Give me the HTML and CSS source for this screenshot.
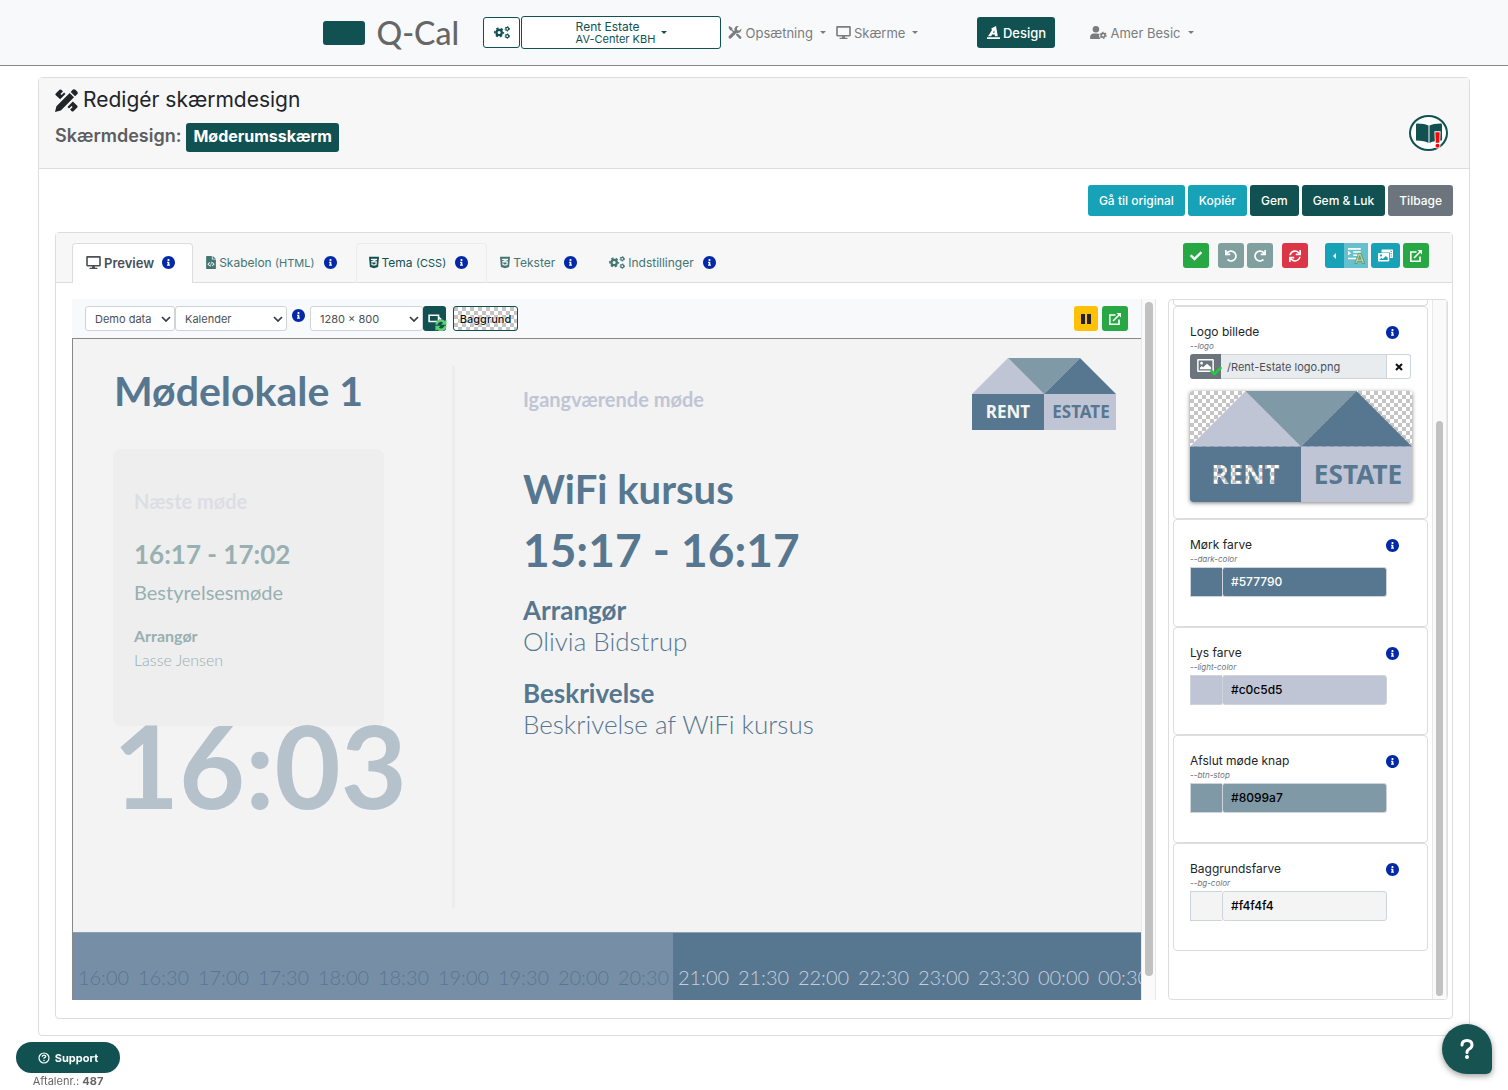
FILE: index.html
```html
<!DOCTYPE html>
<html lang="da">
<head>
<meta charset="utf-8">
<meta name="viewport" content="width=device-width, initial-scale=1">
<title>Q-Cal – Redigér skærmdesign</title>
<link rel="stylesheet" href="styles.css">
</head>
<body>
<svg class="sprite" aria-hidden="true">
  <symbol id="i-check" viewBox="0 0 512 512"><path d="M173.898 439.404l-166.4-166.4c-9.997-9.997-9.997-26.206 0-36.204l36.203-36.204c9.997-9.998 26.207-9.998 36.204 0L192 312.69 432.095 72.596c9.997-9.997 26.207-9.997 36.204 0l36.203 36.204c9.997 9.997 9.997 26.206 0 36.204l-294.4 294.401c-9.998 9.997-26.207 9.997-36.204-.001z"/></symbol>
  <symbol id="i-undo" viewBox="0 0 512 512"><path d="M212.333 224.333H12c-6.627 0-12-5.373-12-12V12C0 5.373 5.373 0 12 0h48c6.627 0 12 5.373 12 12v78.112C117.773 39.279 184.26 7.47 258.175 8.007c136.906.994 246.448 111.623 246.157 248.532C504.041 393.258 393.12 504 256.333 504c-64.089 0-122.496-24.313-166.51-64.215-5.099-4.622-5.334-12.554-.467-17.42l33.967-33.967c4.474-4.474 11.662-4.717 16.401-.525C170.76 415.336 211.58 432 256.333 432c97.268 0 176-78.716 176-176 0-97.267-78.716-176-176-176-58.496 0-110.28 28.476-142.274 72.333h98.274c6.627 0 12 5.373 12 12v48c0 6.627-5.373 12-12 12z"/></symbol>
  <symbol id="i-redo" viewBox="0 0 512 512"><use href="#i-undo" width="512" height="512" transform="matrix(-1 0 0 1 512 0)"/></symbol>
  <symbol id="i-sync" viewBox="0 0 512 512"><path d="M440.65 12.57l4 82.77A247.16 247.16 0 0 0 255.83 8C134.73 8 33.91 94.92 12.29 209.82A12 12 0 0 0 24.09 224h49.05a12 12 0 0 0 11.67-9.26 175.91 175.91 0 0 1 317-56.94l-101.46-4.86a12 12 0 0 0-12.57 12v47.41a12 12 0 0 0 12 12H500a12 12 0 0 0 12-12V12a12 12 0 0 0-12-12h-47.37a12 12 0 0 0-11.98 12.57zM255.83 432a175.61 175.61 0 0 1-146-77.8l101.8 4.87a12 12 0 0 0 12.57-12v-47.4a12 12 0 0 0-12-12H12a12 12 0 0 0-12 12V500a12 12 0 0 0 12 12h47.35a12 12 0 0 0 12-12.6l-4.15-82.57A247.17 247.17 0 0 0 255.83 504c121.11 0 221.93-86.92 243.55-201.82a12 12 0 0 0-11.8-14.18h-49.05a12 12 0 0 0-11.67 9.26A175.86 175.86 0 0 1 255.83 432z"/></symbol>
  <symbol id="i-desktop" viewBox="0 0 576 512"><path d="M528 0H48C21.5 0 0 21.5 0 48v320c0 26.5 21.5 48 48 48h192l-16 48h-72c-13.3 0-24 10.7-24 24s10.7 24 24 24h272c13.3 0 24-10.7 24-24s-10.7-24-24-24h-72l-16-48h192c26.5 0 48-21.5 48-48V48c0-26.5-21.5-48-48-48zm-16 352H64V64h448v288z"/></symbol>
  <symbol id="i-info" viewBox="8 8 496 496"><path d="M256 8C119.043 8 8 119.083 8 256c0 136.997 111.043 248 248 248s248-111.003 248-248C504 119.083 392.957 8 256 8zm0 110c23.196 0 42 18.804 42 42s-18.804 42-42 42-42-18.804-42-42 18.804-42 42-42zm56 254c0 6.627-5.373 12-12 12h-88c-6.627 0-12-5.373-12-12v-24c0-6.627 5.373-12 12-12h12v-64h-12c-6.627 0-12-5.373-12-12v-24c0-6.627 5.373-12 12-12h64c6.627 0 12 5.373 12 12v100h12c6.627 0 12 5.373 12 12v24z"/></symbol>
  <symbol id="i-css" viewBox="0 32 384 448"><path d="M0 32l34.9 395.8L192 480l157.1-52.2L384 32H0zm313.1 80l-4.8 47.3L193 208.6l-.3.1h111.5l-12.8 146.6-98.2 28.7-98.8-29.2-6.4-73.9h48.9l3.2 38.3 52.6 13.3 54.7-15.4 3.7-61.6-166.3-.5v-.1l-.2.1-3.6-46.3L193.1 162l6.5-2.7H76.7L70.9 112h242.2z"/></symbol>
  <symbol id="i-cogs" viewBox="0 0 640 512"><g fill="none" stroke="currentColor"><circle cx="205" cy="256" r="108" stroke-width="90"/><circle cx="205" cy="256" r="172" stroke-width="60" stroke-dasharray="92 88" stroke-dashoffset="46"/><circle cx="530" cy="110" r="58" stroke-width="48"/><circle cx="530" cy="110" r="92" stroke-width="36" stroke-dasharray="50 46.3"/><circle cx="530" cy="402" r="58" stroke-width="48"/><circle cx="530" cy="402" r="92" stroke-width="36" stroke-dasharray="50 46.3"/></g></symbol>
  <symbol id="i-tools" viewBox="0 0 16 16"><path d="M1 0l3.6 2.5.3 2L8 7.600 6.700 8.900 3.600 5.600l-1.800-.5L0 1.500zM9.700 9.300c.9-.4 1.700-.2 2.300.4l3.400 3.400a1.500 1.500 0 0 1-2.200 2.200l-3.400-3.500c-.6-.6-.7-1.500-.1-2.500z"/><path d="M15.700 3.200a4.300 4.300 0 0 1-5.600 5l-6.800 7a2 2 0 0 1-2.800-2.800l7-6.800a4.300 4.300 0 0 1 5.200-5.500L10.400 2.500l.3 2.700 2.700.3z"/></symbol>
  <symbol id="i-pencil-ruler" viewBox="0 0 24 24"><path d="M.8 4.800L4.700.900q1-.9 2 0l1.600 1.600-2.600 2.600 1.200 1.200 2.600-2.600 1.400 1.400L5.400 10.600.8 6.600q-.8-.9 0-1.800zM18.600 13l4.600 4.400q.9.9 0 1.800l-3.900 3.900q-1 .9-1.900 0l-1.600-1.600 2.600-2.600-1.200-1.200-2.600 2.600L13 18.700z"/><path d="M15.300 4.200l4.500 4.500L6.100 22.400 0 24l1.500-6zM16.400 3.100l2-2.200q1.400-1.400 2.900 0l1.800 1.800q1.400 1.400 0 2.900l-2.200 2z"/></symbol>
  <symbol id="i-user-cog" viewBox="0 0 18 14"><circle cx="6.200" cy="3.500" r="3.500"/><path d="M0 14v-2.200C0 9.600 1.700 8 3.800 8h3.800c.8 0 1.600.2 2.200.7-.5 2 .2 4 1.500 5.300z"/><g fill="none" stroke="currentColor"><circle cx="14" cy="10" r="2.100" stroke-width="1.700"/><circle cx="14" cy="10" r="3.300" stroke-width="1.200" stroke-dasharray="1.700 1.760"/></g></symbol>
  <symbol id="i-drafting" viewBox="0 0 13 13"><path fill-rule="evenodd" d="M0 11.300h13V13H0zM1 10.300l4-6.300-.8-1.500L9 0l1.800 10.300H8L7.700 8.500H5l-.8 1.800zM6 6.700h1.500l-.3-2.400z"/></symbol>
  <symbol id="i-file-code" viewBox="0 0 12 16"><path fill-rule="evenodd" d="M.7 0H7v4.300h5v11c0 .4-.3.700-.7.700H.7c-.4 0-.7-.3-.7-.7V.7C0 .3.300 0 .7 0zM8 0l4 3.500H8zM4.200 7.500L1.500 10l2.700 2.500.7-.8L3.100 10l1.800-1.700zM7.800 7.500l-.7.8L8.900 10l-1.800 1.700.7.800L10.500 10zM6.300 7l-1.400 6h.9l1.300-6z"/></symbol>
  <symbol id="i-external" viewBox="0 0 12 12"><path fill="none" stroke="currentColor" stroke-width="1.600" d="M6.500 2H.8v9.200H10V6.500M4 8l6.500-6.500"/><path d="M7.500 0H12v4.500z"/></symbol>
  <symbol id="i-caret" viewBox="0 0 6 3"><path d="M0 0h6L3 3z"/></symbol>
  <symbol id="i-book" viewBox="0 0 26 20"><path d="M0 1.500Q0 .500 1 .500q8 .2 11.500 2V20Q9 17.700 0 17.500zM26 1.500q0-1-1-1-8 .2-11.500 2V20q3.500-2.300 12.500-2.500z"/></symbol>
  <symbol id="i-images" viewBox="0 0 15 12"><path fill-rule="evenodd" d="M4 0h10.300q.7 0 .7.700v7q0 .8-.7.800H12V3H3.500V.7Q3.500 0 4 0zm8.600 1.300v1.200h1.200V1.300zm0 2.300v1.200h1.200V3.600zm0 2.300v1.200h1.200V5.900zM.7 3.500h9.800q.7 0 .7.700v7q0 .8-.7.800H.7q-.7 0-.7-.8v-7q0-.7.700-.7zm.8 7h8.200V8.200L7.700 6.500l-2.900 3-1.300-1.300-2 1.700zM3 5a1 1 0 1 0 .1 0z"/></symbol>
  <symbol id="i-image" viewBox="0 0 18 14"><path fill-rule="evenodd" d="M1 0h16q1 0 1 1v12q0 1-1 1H1q-1 0-1-1V1q0-1 1-1zm.6 1.600v10.800h14.800V1.600zM3 11V9.500l2-2 1.500 1.500 4-4L15 9v2zM4.700 3a1.500 1.500 0 1 0 .1 0z"/></symbol>
  <symbol id="i-house" viewBox="0 0 144 72"><path fill="#c0c5d5" d="M0 36L36 0l36 36zM72 36h72v36H72z"/><path fill="#8099a7" d="M36 0h72L72 36z"/><path fill="#577790" d="M108 0l36 36H72zM0 36h72v36H0z"/></symbol>
</svg>

<header class="navbar">
  <a class="brand" href="#"><span class="brand-mark"></span>Q-Cal</a>
  <button class="btn-outline gear-btn" aria-label="Indstillinger"><svg class="ico w16"><use href="#i-cogs"/></svg></button>
  <button class="btn-outline tenant"><span class="tenant-text">Rent Estate<small>AV-Center KBH</small></span><svg class="caret"><use href="#i-caret"/></svg></button>
  <nav class="menu">
    <a href="#"><svg class="ico w14"><use href="#i-tools"/></svg>Opsætning<svg class="caret"><use href="#i-caret"/></svg></a>
    <a href="#"><svg class="ico w15"><use href="#i-desktop"/></svg>Skærme<svg class="caret"><use href="#i-caret"/></svg></a>
  </nav>
  <a class="design-btn" href="#"><svg class="ico w13"><use href="#i-drafting"/></svg>Design</a>
  <a class="user" href="#"><svg class="ico w17"><use href="#i-user-cog"/></svg>Amer Besic<svg class="caret"><use href="#i-caret"/></svg></a>
</header>

<main class="card page-card">
  <div class="page-head">
    <div>
      <h1><svg class="title-ico"><use href="#i-pencil-ruler"/></svg>Redigér skærmdesign</h1>
      <h2>Skærmdesign: <span class="badge">Møderumsskærm</span></h2>
    </div>
    <button class="guide" aria-label="Vejledning"><svg class="guide-book"><use href="#i-book"/></svg><svg class="guide-mark" viewBox="0 0 8 20"><path d="M1.500 1h5l-.5 12H2zM4 14.200a2.300 2.300 0 1 0 .1 0z"/></svg></button>
  </div>

  <div class="page-body">
    <div class="actions">
      <button class="btn info">Gå til original</button>
      <button class="btn info">Kopiér</button>
      <button class="btn primary">Gem</button>
      <button class="btn primary">Gem &amp; Luk</button>
      <button class="btn secondary">Tilbage</button>
    </div>

    <section class="card">
      <div class="tabbar">
        <nav class="tabs">
          <a class="tab active" href="#"><svg class="ico w15"><use href="#i-desktop"/></svg>Preview<svg class="tip"><use href="#i-info"/></svg></a>
          <a class="tab" href="#"><svg class="ico w10"><use href="#i-file-code"/></svg><span>Skabelon <small>(HTML)</small></span><svg class="tip"><use href="#i-info"/></svg></a>
          <a class="tab hover" href="#"><svg class="ico w10"><use href="#i-css"/></svg><span>Tema <small>(CSS)</small></span><svg class="tip"><use href="#i-info"/></svg></a>
          <a class="tab" href="#"><svg class="ico w10"><use href="#i-css"/></svg>Tekster<svg class="tip"><use href="#i-info"/></svg></a>
          <a class="tab" href="#"><svg class="ico w16"><use href="#i-cogs"/></svg>Indstillinger<svg class="tip"><use href="#i-info"/></svg></a>
        </nav>
        <div class="tools">
          <div class="tool-group"><button class="tool success" aria-label="Anvend"><svg class="ico w12"><use href="#i-check"/></svg></button></div>
          <div class="tool-group">
            <button class="tool muted" aria-label="Fortryd"><svg class="ico w12"><use href="#i-undo"/></svg></button>
            <button class="tool muted" aria-label="Gentag"><svg class="ico w12"><use href="#i-redo"/></svg></button>
          </div>
          <div class="tool-group"><button class="tool danger" aria-label="Nulstil"><svg class="ico w12"><use href="#i-sync"/></svg></button></div>
          <div class="tool-group last">
            <div class="split">
              <button class="tool teal slim" aria-label="Fold ud"><svg class="side-caret" viewBox="0 0 3 6"><path d="M3 0v6L0 3z"/></svg></button>
              <button class="tool teal faded" aria-label="Formatér"><svg class="format-ico" viewBox="0 0 16 16"><path d="M0 1h12v1.500H0zM5 4h7v1.500H5zM5 7h7v1.500H5zM0 10h9v1.500H0zM0 3.500l3 2.300L0 8z" fill="#fff"/><path fill="#b5d69a" stroke="#5d7d52" stroke-width=".6" fill-rule="evenodd" d="M6.500 15.500L9.800 6h2.400l3.500 9.500h-2.200l-.7-2H9.300l-.7 2zm3.400-4h2.300L11 8.300z"/></svg></button>
            </div>
            <button class="tool teal wide" aria-label="Billeder"><svg class="ico w15"><use href="#i-images"/></svg></button>
            <button class="tool success" aria-label="Åbn"><svg class="ico w12"><use href="#i-external"/></svg></button>
          </div>
        </div>
      </div>

      <div class="workspace">
        <div class="preview">
          <div class="preview-main">
            <div class="preview-bar">
              <select class="sel sel-data" aria-label="Data"><option>Demo data</option></select>
              <select class="sel sel-type" aria-label="Type"><option>Kalender</option></select>
              <svg class="tip bar-tip"><use href="#i-info"/></svg>
              <select class="sel sel-size" aria-label="Opløsning"><option>1280 × 800</option></select>
              <button class="rotate" aria-label="Rotér"><svg class="rotate-ico" viewBox="0 0 20 18"><path fill="none" stroke="#fff" stroke-width="1.500" d="M2 3h9v6H2zM11 5l2.500 2"/><g fill="#5fcf73"><path d="M8 12a5.200 5.200 0 0 1 9-3.400L18.600 7v5h-5l1.700-1.700A3.100 3.100 0 0 0 10 12zM18.600 13a5.200 5.200 0 0 1-9 3.600L8 18v-5h5l-1.700 1.700A3.100 3.100 0 0 0 16.500 13z"/></g></svg></button>
              <button class="backdrop">Baggrund</button>
              <span class="spacer"></span>
              <button class="tool warning" aria-label="Pause"><svg class="pause-ico" viewBox="0 0 10 10"><path d="M0 0h4v10H0zM6 0h4v10H6z"/></svg></button>
              <button class="tool success" aria-label="Åbn preview"><svg class="ico w12"><use href="#i-external"/></svg></button>
            </div>
            <div class="stage">
              <div class="stage-body">
                <div class="room">
                  <p class="room-name">Mødelokale 1</p>
                  <div class="next">
                    <p class="next-label">Næste møde</p>
                    <p class="next-time">16:17 - 17:02</p>
                    <p class="next-title">Bestyrelsesmøde</p>
                    <p class="next-host">Arrangør</p>
                    <p class="next-person">Lasse Jensen</p>
                  </div>
                  <p class="clock">16:03</p>
                </div>
                <div class="rule"></div>
                <div class="current">
                  <p class="now-label">Igangværende møde</p>
                  <p class="now-title">WiFi kursus</p>
                  <p class="now-time">15:17 - 16:17</p>
                  <p class="now-head">Arrangør</p>
                  <p class="now-text">Olivia Bidstrup</p>
                  <p class="now-head second">Beskrivelse</p>
                  <p class="now-text">Beskrivelse af WiFi kursus</p>
                </div>
                <svg class="stage-logo" viewBox="0 0 144 72" role="img" aria-label="Rent Estate"><use href="#i-house"/><g class="logo-text"><text x="36" y="60" fill="#f4f4f4">RENT</text><text x="109" y="60" fill="#577790">ESTATE</text></g></svg>
              </div>
              <div class="timeline">
                <span class="past">16:00</span><span class="past">16:30</span><span class="past">17:00</span><span class="past">17:30</span><span class="past">18:00</span><span class="past">18:30</span><span class="past">19:00</span><span class="past">19:30</span><span class="past">20:00</span><span class="past">20:30</span><span>21:00</span><span>21:30</span><span>22:00</span><span>22:30</span><span>23:00</span><span>23:30</span><span>00:00</span><span>00:30</span>
              </div>
            </div>
          </div>
          <div class="track preview-track"><div class="thumb"></div></div>
        </div>

        <aside class="panel">
          <div class="fields">
            <div class="field stub"></div>
            <div class="field logo-field">
              <div class="field-head"><label for="f-logo">Logo billede</label><svg class="tip"><use href="#i-info"/></svg></div>
              <em>--logo</em>
              <div class="file-row">
                <button class="pick" aria-label="Vælg billede"><svg class="pick-ico"><use href="#i-image"/></svg><svg class="pick-check"><use href="#i-check"/></svg></button>
                <input id="f-logo" type="text" value="/Rent-Estate logo.png" readonly>
                <button class="clear" aria-label="Fjern"><svg viewBox="0 0 8 8"><path d="M1 1l6 6M7 1L1 7"/></svg></button>
              </div>
              <div class="thumb-img"><svg viewBox="0 0 144 72" role="img" aria-label="Rent Estate logo"><defs><pattern id="checks" width="5" height="5" patternUnits="userSpaceOnUse"><path fill="#fff" d="M0 0h5v5H0z"/><path fill="#bbb" d="M0 0h2.500v2.500H0zM2.500 2.500H5V5H2.500z"/></pattern></defs><use href="#i-house"/><g class="logo-text"><text x="36" y="60" fill="url(#checks)">RENT</text><text x="109" y="60" fill="#577790">ESTATE</text></g></svg></div>
            </div>
            <div class="field">
              <div class="field-head"><label for="f-dark">Mørk farve</label><svg class="tip"><use href="#i-info"/></svg></div>
              <em>--dark-color</em>
              <div class="color-row"><input type="color" value="#577790" aria-label="Vælg mørk farve"><input id="f-dark" class="c-dark" type="text" value="#577790"></div>
            </div>
            <div class="field">
              <div class="field-head"><label for="f-light">Lys farve</label><svg class="tip"><use href="#i-info"/></svg></div>
              <em>--light-color</em>
              <div class="color-row"><input type="color" value="#c0c5d5" aria-label="Vælg lys farve"><input id="f-light" class="c-light" type="text" value="#c0c5d5"></div>
            </div>
            <div class="field">
              <div class="field-head"><label for="f-stop">Afslut møde knap</label><svg class="tip"><use href="#i-info"/></svg></div>
              <em>--btn-stop</em>
              <div class="color-row"><input type="color" value="#8099a7" aria-label="Vælg knapfarve"><input id="f-stop" class="c-stop" type="text" value="#8099a7"></div>
            </div>
            <div class="field">
              <div class="field-head"><label for="f-bg">Baggrundsfarve</label><svg class="tip"><use href="#i-info"/></svg></div>
              <em>--bg-color</em>
              <div class="color-row"><input type="color" value="#f4f4f4" aria-label="Vælg baggrundsfarve"><input id="f-bg" class="c-bg" type="text" value="#f4f4f4"></div>
            </div>
          </div>
          <div class="track panel-track"><div class="thumb"></div></div>
        </aside>
      </div>
    </section>
  </div>
</main>

<div class="support">
  <button class="support-btn"><svg viewBox="0 0 12 12"><circle cx="6" cy="6" r="5" fill="none" stroke="currentColor" stroke-width="1.200"/><path d="M4.300 4.800q0-1.600 1.700-1.600t1.700 1.400Q7.700 5.400 6 6v.8" fill="none" stroke="currentColor" stroke-width="1.300"/><circle cx="6" cy="8.500" r=".8"/></svg>Support</button>
  <span>Aftalenr.: <b>487</b></span>
</div>
<button class="help" aria-label="Hjælp"><svg viewBox="0 0 14 20"><path d="M2 6q0-4.500 5-4.500T12 6q0 2.500-2.800 4Q7 11.200 7 13.500" fill="none" stroke="#fff" stroke-width="3" stroke-linecap="round"/><circle cx="7" cy="18" r="2" fill="#fff"/></svg></button>
</body>
</html>
```
FILE: styles.css
```css
:root {
  --primary: #115151;
  --teal: #17a2b8;
  --green: #28a745;
  --dark: #577790;
  --light: #c0c5d5;
  --stop: #8099a7;
  --bg: #f4f4f4;
  --line: #dcdddf;
  --checker: conic-gradient(#fff 25%, #c4c4c4 0 50%, #fff 0 75%, #c4c4c4 0) 0 0 / 8px 8px;
}
* { box-sizing: border-box; }
body { margin: 0; background: #fff; color: #212529; font: 13px/20px Inter, "Liberation Sans", sans-serif; }
p, h1, h2 { margin: 0; }
a { color: inherit; text-decoration: none; }
button, input, select { font: inherit; color: inherit; margin: 0; }
button { padding: 0; border: 0; background: none; cursor: pointer; }
svg { display: block; flex: none; fill: currentColor; }
.sprite { position: absolute; width: 0; height: 0; }
.ico { height: 13px; }
.w10 { width: 10px; } .w12 { width: 12px; height: 12px; } .w13 { width: 13px; } .w14 { width: 14px; }
.w15 { width: 15px; } .w16 { width: 16px; } .w17 { width: 17px; }
.caret { width: 6px; height: 3px; }
.tip { width: 13px; height: 13px; color: #0329a8; }

/* top bar */
.navbar { display: flex; align-items: center; justify-content: center; height: 66px; padding-left: 9px; background: #f8f9fb; border-bottom: 1px solid #888; }
.brand { display: flex; align-items: center; gap: 11px; width: 160px; font: 500 32px/24px Lato, sans-serif; color: #666; }
.brand-mark { width: 42px; height: 24px; border-radius: 3px; background: var(--primary); }
.btn-outline { display: flex; align-items: center; justify-content: center; border: 1px solid var(--primary); border-radius: 3px; background: #fff; color: var(--primary); }
.gear-btn { width: 37px; height: 31px; }
.tenant { gap: 6px; width: 200px; height: 33px; margin-left: 1px; }
.tenant-text { text-align: left; font-size: 12px; line-height: 13px; }
.tenant-text small { display: block; font-size: 11px; line-height: 12px; }
.menu { display: flex; gap: 10px; width: 256px; padding-left: 7px; color: #7b7c7e; }
.menu a, .user { display: flex; align-items: center; gap: 3px; }
.menu .caret, .user .caret { margin-left: 4px; }
.design-btn { display: flex; align-items: center; justify-content: center; gap: 3px; width: 78px; height: 31px; border-radius: 3px; background: var(--primary); color: #fff; font-weight: 500; }
.user { margin-left: 35px; color: #7b7c7e; }

/* cards */
.card { border: 1px solid var(--line); border-radius: 4px; background: #fff; }
.page-card { margin: 11px 38px 0; }
.page-head { display: flex; justify-content: space-between; height: 91px; padding: 9px 21px 0 16px; background: #f7f7f7; border-bottom: 1px solid var(--line); }
h1 { display: flex; align-items: center; gap: 5px; font-size: 21px; line-height: 26px; font-weight: 400; }
.title-ico { width: 23px; height: 23px; }
h2 { display: flex; align-items: flex-start; gap: 5px; margin-top: 10px; font-size: 18px; line-height: 26px; font-weight: 600; color: #5d5e60; }
.badge { padding: 0 7px 2px; border-radius: 3px; background: var(--primary); color: #fff; font-size: 16px; line-height: 27px; font-weight: 700; }
.guide { position: relative; display: flex; align-items: center; justify-content: center; width: 39px; height: 36px; margin-top: 28px; border: 2px solid var(--primary); border-radius: 50%; background: #fff; color: var(--primary); }
.guide-book { width: 26px; height: 20px; }
.guide-mark { position: absolute; right: 5px; bottom: 0; width: 7px; height: 18px; overflow: visible; fill: red; stroke: #fff; stroke-width: 2; paint-order: stroke; }
.page-body { padding: 16px; }
.actions { display: flex; justify-content: flex-end; gap: 3px; margin-bottom: 16px; }
.btn { height: 31px; padding: 0 11px; border-radius: 3px; color: #fff; font-size: 12px; font-weight: 500; }
.info, .teal { background: var(--teal); }
.primary { background: var(--primary); }
.secondary { background: #6c757d; }

/* tab row */
.tabbar { display: flex; justify-content: space-between; align-items: flex-start; height: 50px; padding: 10px 23px 0 16px; background: #f7f7f7; border-bottom: 1px solid var(--line); }
.tabs { display: flex; }
.tab { display: flex; align-items: center; gap: 3px; height: 40px; padding: 0 18px 2px 12px; border: 1px solid transparent; border-bottom: 0; border-radius: 4px 4px 0 0; font-size: 12px; color: #437573; white-space: nowrap; }
.tab small { font-size: 11px; }
.tab .tip { margin-left: 6px; }
.tab.active { padding-left: 13px; padding-right: 17px; border-color: var(--line); background: #fff; color: #495057; font-size: 13px; font-weight: 600; }
.tab.active .tip { margin-left: 5px; }
.tab.hover { border-color: #ebecee; color: var(--primary); }
.tools { display: flex; gap: 9px; }
.tool-group { display: flex; gap: 3px; }
.tool-group.last { margin-left: 8px; }
.split { display: flex; }
.tool { display: flex; align-items: center; justify-content: center; width: 26px; height: 25px; border-radius: 3px; color: #fff; }
.success { background: var(--green); }
.danger { background: #dc3545; }
.muted { background: #7fa09f; }
.warning { width: 24px; background: #ffc107; color: #212529; }
.slim { width: 19px; border-radius: 3px 0 0 3px; }
.faded { width: 24px; border-radius: 0; background: #66c0ce; }
.wide { width: 29px; }
.side-caret { width: 3px; height: 6px; }
.format-ico { width: 17px; height: 17px; }
.pause-ico { width: 10px; height: 10px; }

/* workspace */
.workspace { display: flex; gap: 12px; height: calc(100vh - 355px); min-height: 735px; padding: 16px 4px 18px 16px; }
.preview { display: flex; flex: 1; min-width: 0; }
.preview-main { display: flex; flex-direction: column; flex: 1; min-width: 0; }
.preview-bar { display: flex; align-items: center; height: 39px; padding: 0 13px; background: #f8f9fb; }
.sel { height: 25px; padding: 0 9px; border: 1px solid #ced4da; border-radius: 3px; appearance: none; color: #495057; font-size: 11px; background: #fff url("data:image/svg+xml,%3Csvg xmlns='http://www.w3.org/2000/svg' viewBox='0 0 10 6'%3E%3Cpath d='M1 1l4 4 4-4' fill='none' stroke='%23343a40' stroke-width='1.7'/%3E%3C/svg%3E") no-repeat right 3px center / 10px 6px; }
.sel-data { width: 90px; }
.sel-type { width: 112px; }
.sel-size { width: 113px; }
.bar-tip { margin: 0 5px 6px; }
.rotate { width: 23px; height: 25px; border-radius: 3px; background: var(--primary); }
.rotate-ico { width: 21px; height: 19px; margin: 5px 0 0 4px; }
.backdrop { width: 65px; height: 25px; margin-left: 7px; border: 1px solid var(--primary); border-radius: 3px; background: var(--checker); color: #111; font-size: 11px; font-weight: 500; text-shadow: 0 0 2px #fff, 0 0 2px #fff; }
.spacer { flex: 1; }
.preview-bar .warning { margin-right: 4px; }

/* screen preview */
.stage { display: flex; flex-direction: column; flex: 1; min-height: 0; overflow: hidden; border: solid #888; border-width: 1px 0 0 1px; background: #f3f3f3; color: var(--dark); font-family: Lato, sans-serif; }
.stage-body { display: flex; flex: 1; min-height: 0; }
.room { width: 379px; padding: 30px 0 0 40px; }
.room-name { height: 80px; padding-left: 1px; font-size: 41px; line-height: 44px; font-weight: 700; }
.next { width: 271px; height: 277px; padding: 39px 21px 0; border-radius: 8px; background: #eee; color: #98b0b1; }
.next-label { font-size: 20px; line-height: 26px; font-weight: 700; color: #dddee5; }
.next-time { margin-top: 24px; font-size: 26px; line-height: 32px; font-weight: 700; }
.next-title { margin-top: 9px; font-size: 20px; line-height: 26px; }
.next-host { margin-top: 21px; font-size: 16px; line-height: 20px; font-weight: 700; }
.next-person { margin-top: 4px; font-size: 16px; line-height: 20px; font-weight: 300; }
.clock { font-size: 114px; line-height: 78px; font-weight: 700; color: #b5c1cb; }
.rule { width: 3px; margin: 27px 0 24px; background: #ececec; }
.current { flex: 1; padding: 47px 0 0 68px; }
.now-label { font-size: 20px; line-height: 26px; font-weight: 700; color: var(--light); }
.now-title { margin-top: 53px; font-size: 40px; line-height: 48px; font-weight: 700; }
.now-time { margin-top: 8px; font-size: 46px; line-height: 58px; font-weight: 700; }
.now-head { margin-top: 15px; font-size: 26px; line-height: 32px; font-weight: 700; }
.now-head.second { margin-top: 20px; }
.now-text { font-size: 26px; line-height: 31px; font-weight: 300; }
.stage-logo { width: 144px; height: 72px; margin: 19px 25px 0 0; }
.logo-text { font: 700 17px "Noto Sans", sans-serif; text-anchor: middle; }
.timeline { display: flex; flex: none; height: 68px; overflow: hidden; background: var(--dark); }
.timeline span { flex: none; width: 60px; border-top: 1px solid #8ea1b1; padding: 31px 0 0 1px; text-align: center; font-size: 20px; line-height: 26px; font-weight: 300; color: #c8cddb; }
.timeline .past { background: #778fa6; color: var(--dark); }

/* scroll tracks */
.track { flex: none; width: 15px; padding: 3px; border: solid #e8e8e8; border-width: 0 1px; background: #fafafa; }
.track .thumb { width: 8px; border-radius: 4px; background: #c1c1c1; }
.preview-track .thumb { height: 97%; }
.panel-track { display: flex; align-items: flex-end; }
.panel-track .thumb { height: 83%; }

/* property panel */
.panel { display: flex; width: 280px; border: 1px solid var(--line); border-radius: 4px; overflow: hidden; }
.fields { flex: 1; min-width: 0; padding: 0 4px; }
.field { height: 108px; padding: 16px 15px 0 16px; border: 1px solid var(--line); border-radius: 4px; }
.stub { height: 6px; padding: 0; border-top: 0; border-radius: 0 0 4px 4px; }
.logo-field { height: 213px; }
.field-head { display: flex; align-items: center; justify-content: space-between; height: 18px; padding-right: 13px; font-size: 12px; }
.field em { display: block; margin-bottom: 3px; font-size: 8px; line-height: 10px; color: #6c757d; }
.file-row { display: flex; height: 25px; margin-right: 1px; }
.pick { position: relative; z-index: 1; flex: none; width: 31px; padding: 0 7px; border-radius: 3px 0 0 3px; background: #6c757d; color: #fff; }
.pick-ico { width: 17px; height: 13px; margin-bottom: 3px; }
.pick-check { position: absolute; right: -1px; bottom: 2px; width: 12px; height: 12px; color: #1fcf35; }
.file-row input { flex: 1; min-width: 0; padding: 0 6px; border: 1px solid #ced4da; border-left: 0; background: #e9ecef; color: #495057; font-size: 11px; }
.clear { display: flex; align-items: center; justify-content: center; flex: none; width: 24px; border: 1px solid #ced4da; border-left: 0; border-radius: 0 3px 3px 0; }
.clear svg { width: 8px; height: 8px; fill: none; stroke: #111; stroke-width: 2; }
.thumb-img { margin-top: 12px; border-radius: 3px; background: var(--checker); box-shadow: 0 1px 4px rgba(0, 0, 0, .5); overflow: hidden; }
.thumb-img svg { width: 100%; }
.color-row { display: flex; width: 197px; height: 30px; }
.color-row input { border: 1px solid #ced4da; }
.color-row input[type="color"] { width: 32px; height: 30px; padding: 0; border-right: 0; appearance: none; background: none; }
.color-row input::-webkit-color-swatch-wrapper { padding: 0; }
.color-row input::-webkit-color-swatch { border: 0; border-radius: 0; }
.color-row input[type="text"] { flex: 1; min-width: 0; padding: 0 8px; border-radius: 3px; font-size: 12px; font-weight: 500; }
.color-row .c-dark { background: var(--dark); color: #fff; }
.color-row .c-light { background: var(--light); color: #000; }
.color-row .c-stop { background: var(--stop); color: #000; }
.color-row .c-bg { background: var(--bg); color: #000; }

/* floating helpers */
.support { position: fixed; left: 16px; bottom: 2px; display: flex; flex-direction: column; align-items: center; width: 104px; font-size: 11px; line-height: 14px; color: #666; }
.support-btn { display: flex; align-items: center; justify-content: center; gap: 5px; width: 104px; height: 31px; margin-bottom: 1px; border-radius: 16px; background: var(--primary); color: #fff; font-weight: 700; }
.support-btn svg { width: 12px; height: 12px; }
.help { position: fixed; right: 16px; bottom: 16px; display: flex; align-items: center; justify-content: center; width: 50px; height: 50px; border-radius: 25px 25px 6px 25px; background: #175351; box-shadow: 0 2px 6px rgba(0, 0, 0, .4); }
.help svg { width: 14px; height: 20px; }
```
